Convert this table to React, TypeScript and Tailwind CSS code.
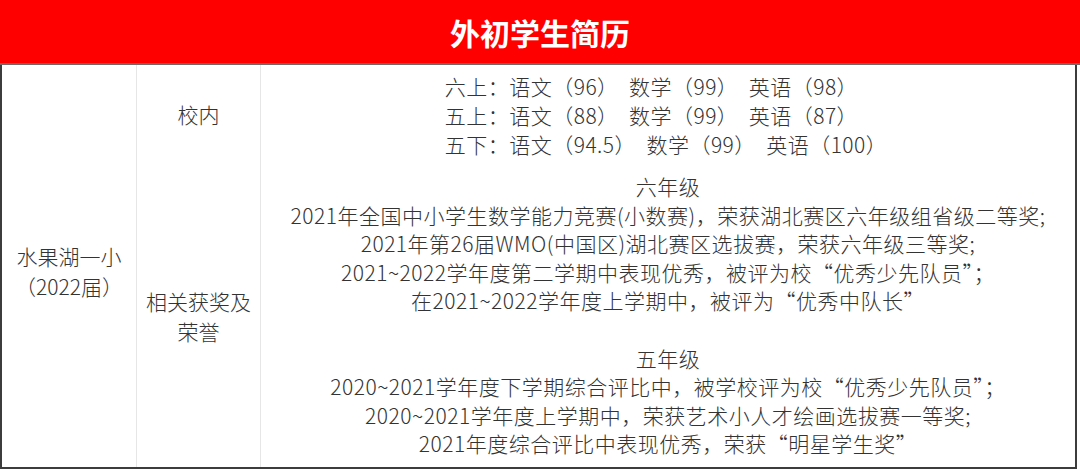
import React from "react";

const scores = [
  "六上：语文（96）  数学（99）  英语（98）",
  "五上：语文（88）  数学（99）  英语（87）",
  "五下：语文（94.5）  数学（99）  英语（100）",
];

const awards = [
  "六年级",
  "2021年全国中小学生数学能力竞赛(小数赛)，荣获湖北赛区六年级组省级二等奖;",
  "2021年第26届WMO(中国区)湖北赛区选拔赛，荣获六年级三等奖;",
  "2021~2022学年度第二学期中表现优秀，被评为校“优秀少先队员”；",
  "在2021~2022学年度上学期中，被评为“优秀中队长”",
  "\u00a0",
  "五年级",
  "2020~2021学年度下学期综合评比中，被学校评为校“优秀少先队员”；",
  "2020~2021学年度上学期中，荣获艺术小人才绘画选拔赛一等奖;",
  "2021年度综合评比中表现优秀，荣获“明星学生奖”",
];

export default function App() {
  return (
    <div className="w-[1080px] h-[469px] bg-white overflow-hidden font-['Noto_Sans_CJK_SC','Noto_Sans',sans-serif] text-[#333]">
      <div className="h-[63px] bg-[#ff0000] flex items-center justify-center">
        <span className="text-white font-bold text-[30px] leading-none">外初学生简历</span>
      </div>
      <div className="h-[2px] bg-[#6b6b6b]" />
      <div className="w-[1077px] h-[404px] border-l-2 border-r-2 border-b-2 border-[#3c3c3c] grid grid-cols-[135px_124px_1fr] grid-rows-[100px_1fr] text-[21px] font-light">
        <div className="row-span-2 border-r border-[#e6e6e6] flex flex-col items-center justify-center leading-[30px] pt-[9px]">
          <div>水果湖一小</div>
          <div>（2022届）</div>
        </div>
        <div className="border-r border-[#e6e6e6] flex items-center justify-center">
          校内
        </div>
        <div className="flex items-center justify-center">
          <div className="flex flex-col items-start leading-[29px] tracking-[0.5px] pr-[4px]">
            {scores.map((s) => (
              <div key={s} className="whitespace-pre">{s}</div>
            ))}
          </div>
        </div>
        <div className="border-r border-[#e6e6e6] flex items-center justify-center">
          <div className="w-[106px] text-center leading-[30px]">相关获奖及荣誉</div>
        </div>
        <div className="flex flex-col items-center justify-center leading-[28.6px] pb-[2px] tracking-[0.5px]">
          {awards.map((a, i) => (
            <div key={i} className="whitespace-pre">{a}</div>
          ))}
        </div>
      </div>
    </div>
  );
}
